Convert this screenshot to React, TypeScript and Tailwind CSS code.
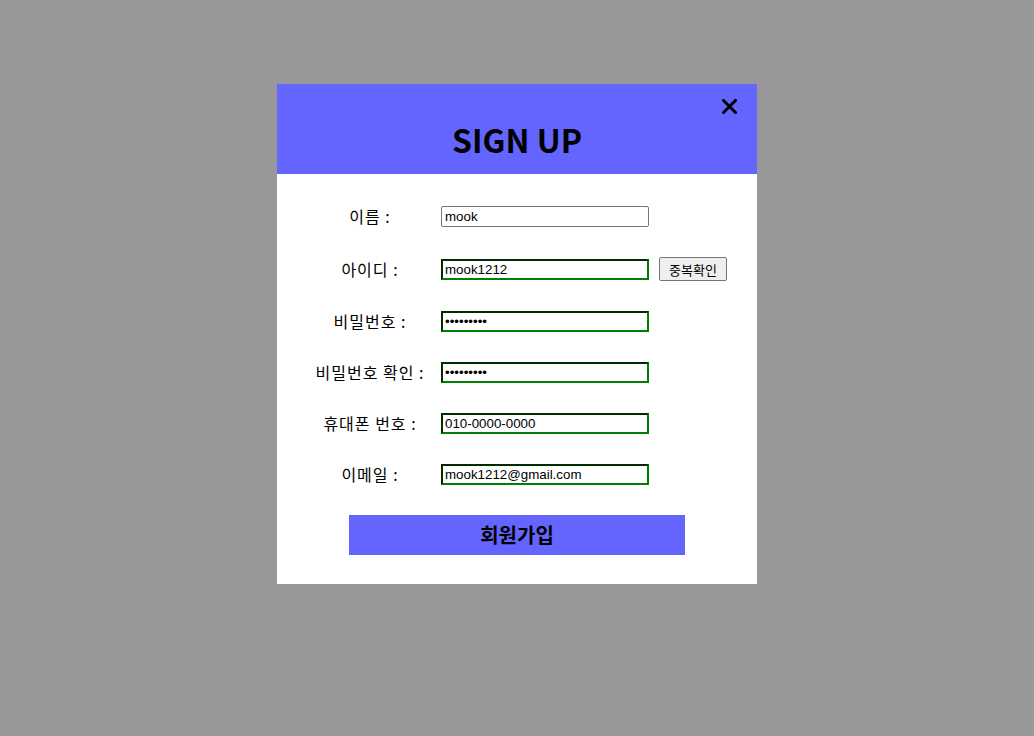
import React, { useState } from 'react';

interface Field {
  key: string;
  label: string;
  type: string;
  value: string;
  check?: boolean;
  plain?: boolean;
}

const initialFields: Field[] = [
  { key: 'name', label: '이름 :', type: 'text', value: 'mook', plain: true },
  { key: 'id', label: '아이디 :', type: 'text', value: 'mook1212', check: true },
  { key: 'pw', label: '비밀번호 :', type: 'password', value: 'mook12121' },
  { key: 'pw2', label: '비밀번호 확인 :', type: 'password', value: 'mook12121' },
  { key: 'phone', label: '휴대폰 번호 :', type: 'text', value: '010-0000-0000' },
  { key: 'email', label: '이메일 :', type: 'text', value: 'mook1212@gmail.com' },
];

export default function App() {
  const [fields, setFields] = useState<Field[]>(initialFields);

  const update = (key: string, value: string) => {
    setFields(prev => prev.map(f => (f.key === key ? { ...f, value } : f)));
  };

  return (
    <div className="w-full h-[736px] bg-[#98989a] pt-[84px] font-['Noto_Sans_CJK_KR',sans-serif]">
      <div className="mx-auto w-[480px] h-[500px] bg-white flex flex-col">
        <div className="relative h-[90px] bg-[#6464ff] flex items-center justify-center">
          <h1 className="text-[32px] font-bold text-black leading-none mt-[19px]">SIGN UP</h1>
          <button type="button" className="absolute right-[20px] top-[15px] w-[15px] h-[15px]">
            <svg width="15" height="15" viewBox="0 0 15 15">
              <path d="M1.5 1.5 L13.5 13.5 M13.5 1.5 L1.5 13.5" stroke="black" strokeWidth="3" strokeLinecap="square" />
            </svg>
          </button>
        </div>

        <div className="flex flex-col gap-[30px] pt-[32px]">
          {fields.map(f => (
            <div key={f.key} className="flex items-center">
              <label className="ml-[23px] w-[140px] text-center text-base leading-[21px] tracking-[1px] text-black">{f.label}</label>
              <input
                type={f.type}
                value={f.value}
                onChange={e => update(f.key, e.target.value)}
                className={
                  f.plain
                    ? "ml-[1px] w-[208px] h-[21px] px-[3px] border border-[#767676] rounded-[2px] text-[13.33px] font-['Liberation_Sans',sans-serif] text-black outline-none"
                    : "ml-[1px] w-[208px] h-[21px] px-[2px] border-2 [border-style:inset] border-[#008000] text-[13.33px] font-['Liberation_Sans',sans-serif] text-black outline-none"
                }
              />
              {f.check && (
                <button
                  type="button"
                  className="ml-[10px] w-[68px] h-[24px] bg-[#efefef] border border-[#767676] rounded-[2px] text-[13px] text-black leading-none"
                >
                  중복확인
                </button>
              )}
            </div>
          ))}
        </div>

        <div className="flex justify-center mt-[30px]">
          <button type="button" className="w-[336px] h-[40px] bg-[#6464ff] text-[20px] font-bold text-black">
            회원가입
          </button>
        </div>
      </div>
    </div>
  );
}
